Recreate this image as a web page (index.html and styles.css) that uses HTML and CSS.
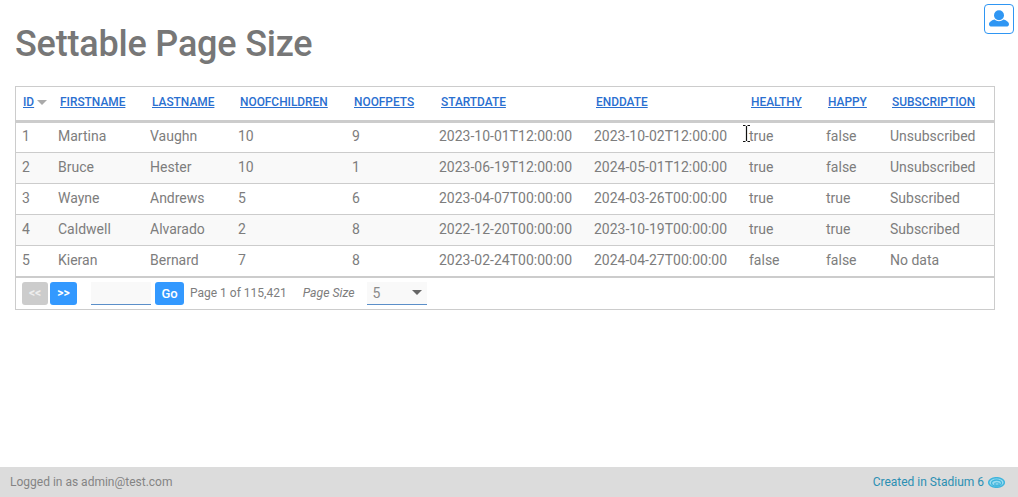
FILE: index.html
```html
<!DOCTYPE html>
<html lang="en">
<head>
<meta charset="utf-8">
<title>Settable Page Size</title>
<link rel="stylesheet" href="styles.css">
</head>
<body>
<div class="page">
  <main class="content">
    <div class="topbar">
      <button class="user-btn" aria-label="User">
        <svg width="20" height="20" viewBox="0 0 20 20"><circle cx="10" cy="6.2" r="5"/><path d="M0 15.2C0 13 3.4 11 5.6 10.6 7 11.8 8.4 12.3 10 12.3s3-.5 4.4-1.7C16.6 11 20 13 20 15.2c0 1.6-1.2 2.3-2.6 2.3H2.6C1.200 17.500 0 16.800 0 15.200z"/></svg>
      </button>
    </div>
    <h1 class="title">Settable Page Size</h1>
    <div class="grid-box">
      <table class="grid">
        <colgroup>
          <col class="c1"><col class="c2"><col class="c3"><col class="c4"><col class="c5"><col class="c6"><col class="c7"><col class="c8"><col class="c9"><col class="c10">
        </colgroup>
        <thead>
          <tr>
            <th><a href="#">ID</a><span class="sort"></span></th>
            <th><a href="#">FIRSTNAME</a></th>
            <th><a href="#">LASTNAME</a></th>
            <th><a href="#">NOOFCHILDREN</a></th>
            <th><a href="#">NOOFPETS</a></th>
            <th><a href="#">STARTDATE</a></th>
            <th><a href="#">ENDDATE</a></th>
            <th><a href="#">HEALTHY</a></th>
            <th><a href="#">HAPPY</a></th>
            <th><a href="#">SUBSCRIPTION</a></th>
          </tr>
        </thead>
        <tbody>
          <tr><td>1</td><td>Martina</td><td>Vaughn</td><td>10</td><td>9</td><td>2023-10-01T12:00:00</td><td>2023-10-02T12:00:00</td><td class="cursor-cell"><svg class="ibeam" width="9" height="17" viewBox="0 0 9 17"><path d="M1 .5h2.500M5.500.5H8M4.500 1v15M1 16.500h2.500M5.500 16.500H8" fill="none" stroke="#111" stroke-width="1.200"/></svg>true</td><td>false</td><td>Unsubscribed</td></tr>
          <tr><td>2</td><td>Bruce</td><td>Hester</td><td>10</td><td>1</td><td>2023-06-19T12:00:00</td><td>2024-05-01T12:00:00</td><td>true</td><td>false</td><td>Unsubscribed</td></tr>
          <tr><td>3</td><td>Wayne</td><td>Andrews</td><td>5</td><td>6</td><td>2023-04-07T00:00:00</td><td>2024-03-26T00:00:00</td><td>true</td><td>true</td><td>Subscribed</td></tr>
          <tr><td>4</td><td>Caldwell</td><td>Alvarado</td><td>2</td><td>8</td><td>2022-12-20T00:00:00</td><td>2023-10-19T00:00:00</td><td>true</td><td>true</td><td>Subscribed</td></tr>
          <tr><td>5</td><td>Kieran</td><td>Bernard</td><td>7</td><td>8</td><td>2023-02-24T00:00:00</td><td>2024-04-27T00:00:00</td><td>false</td><td>false</td><td>No data</td></tr>
        </tbody>
      </table>
      <div class="pager">
        <button class="btn btn-nav btn-off">&lt;&lt;</button>
        <button class="btn btn-nav">&gt;&gt;</button>
        <input class="page-input" type="text" aria-label="Page">
        <button class="btn btn-go">Go</button>
        <span class="page-info">Page 1 of 115,421</span>
        <span class="size-label">Page Size</span>
        <div class="size-select"><span>5</span><i class="caret"></i></div>
      </div>
    </div>
  </main>
  <footer class="footer">
    <span>Logged in as admin@test.com</span>
    <span class="credit">Created in Stadium 6
      <svg width="17" height="11" viewBox="0 0 17 11" fill="#9adcf0" stroke="#3fb4dc"><ellipse cx="8.500" cy="5.500" rx="7.800" ry="4.800" stroke-width="1.500"/><ellipse cx="8.500" cy="6" rx="5" ry="3" stroke-width="1.300"/><ellipse cx="9" cy="7" rx="2.300" ry="1.300" stroke-width="1.100"/></svg>
    </span>
  </footer>
</div>
</body>
</html>
```
FILE: styles.css
```css
* { box-sizing: border-box; }
html, body { margin: 0; height: 100%; }
body { font-family: Roboto, "Liberation Sans", sans-serif; color: #777; background: #fff; }
.page { height: 497px; display: flex; flex-direction: column; overflow: hidden; }
.content { flex: 1; padding: 4px 23px 0 15px; min-height: 0; }
.topbar { display: flex; justify-content: flex-end; margin-right: -19px; height: 30px; }
.user-btn { width: 30px; height: 30px; padding: 0; border: 1px solid #2f96f3; border-radius: 4px; background: #fff; display: flex; align-items: center; justify-content: center; }
.user-btn svg { fill: #2f96f3; }
.title { margin: -11px 0 0; font-size: 36px; letter-spacing: -0.2px; line-height: 42px; font-weight: 500; color: #777; }
.grid-box { margin-top: 21px; width: 980px; border: 1px solid #ccc; }
.grid { width: 978px; border-collapse: collapse; table-layout: fixed; font-size: 14px; color: #7d7d7d; }
.c1 { width: 36px; } .c2 { width: 92px; } .c3 { width: 88px; } .c4 { width: 114px; } .c5 { width: 87px; }
.c6 { width: 155px; } .c7 { width: 155px; } .c8 { width: 77px; } .c9 { width: 64px; } .c10 { width: 110px; }
th { height: 34px; padding: 0 0 2px 8px; text-align: left; font-size: 11.900px; font-weight: 500; border-bottom: 3px solid #ccc; white-space: nowrap; }
th:first-child { padding-left: 7px; }
th a { color: #2a6fd0; text-decoration: underline; }
.sort { display: inline-block; margin-left: 3px; vertical-align: 1px; width: 0; height: 0; border-left: 5px solid transparent; border-right: 5px solid transparent; border-top: 5px solid #aaa; }
td { height: 31px; padding: 0 6px 2px; border-bottom: 1px solid #ccc; white-space: nowrap; }
tbody tr:nth-child(even) td { background: #f9f9f9; }
.cursor-cell { position: relative; }
.ibeam { position: absolute; left: -1px; top: 2px; }
.pager { height: 32px; border-top: 1px solid #ccc; display: flex; align-items: center; padding-left: 6px; font-size: 12px; color: #7d7d7d; }
.btn { height: 23px; border: 0; border-radius: 3px; background: #3399ff; color: #fff; font-family: inherit; padding: 0; font-weight: 500; }
.btn-nav { width: 26px; font-size: 12px; font-weight: 700; margin-right: 2px; }
.btn-nav + .btn-nav { width: 27px; margin-right: 1px; }
.btn-off { background: #ccc; color: #eee; }
.page-input { width: 60px; height: 23px; margin-left: 13px; border: 0; border-bottom: 1px solid #5b8fc9; background: #f9f9f9; }
.btn-go { width: 29px; font-size: 13px; font-weight: 500; margin-left: 4px; }
.page-info { margin-left: 6px; }
.size-label { margin-left: 16px; font-size: 12.250px; font-style: italic; }
.size-select { width: 60px; height: 23px; margin-left: 12px; background: #f9f9f9; border-bottom: 1px solid #5b8fc9; display: flex; align-items: center; justify-content: space-between; padding: 0 5px 0 6px; font-size: 14px; color: #8a8a8a; }
.caret { width: 0; height: 0; border-left: 5px solid transparent; border-right: 5px solid transparent; border-top: 5px solid #666; }
.footer { height: 30px; background: #dcdcdc; display: flex; justify-content: space-between; align-items: center; padding: 0 13px 0 10px; font-size: 12px; flex: none; color: #848484; }
.credit { color: #2b8fb3; display: flex; align-items: center; gap: 4px; }
```
